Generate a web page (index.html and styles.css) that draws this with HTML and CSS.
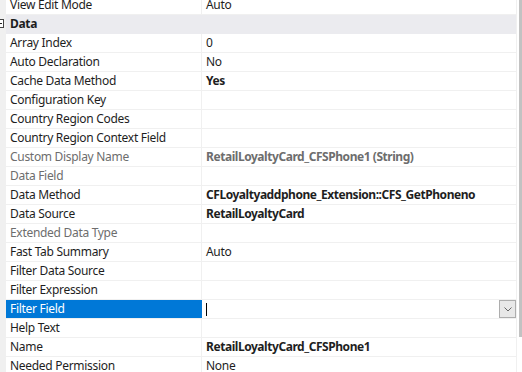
FILE: index.html
```html
<!DOCTYPE html>
<html lang="en">
<head>
  <meta charset="UTF-8">
  <title>Properties</title>
  <link rel="stylesheet" href="styles.css">
</head>
<body>
  <div class="property-grid">
    <div class="gutter">
      <span class="expander"></span>
    </div>
    <div class="props">
      <div class="row first"><div class="name">View Edit Mode</div><div class="value">Auto</div></div>
      <div class="row group"><div class="name">Data</div></div>
      <div class="row"><div class="name">Array Index</div><div class="value">0</div></div>
      <div class="row"><div class="name">Auto Declaration</div><div class="value">No</div></div>
      <div class="row"><div class="name">Cache Data Method</div><div class="value bold">Yes</div></div>
      <div class="row"><div class="name">Configuration Key</div><div class="value"></div></div>
      <div class="row"><div class="name">Country Region Codes</div><div class="value"></div></div>
      <div class="row"><div class="name">Country Region Context Field</div><div class="value"></div></div>
      <div class="row readonly"><div class="name">Custom Display Name</div><div class="value bold">RetailLoyaltyCard_CFSPhone1 (String)</div></div>
      <div class="row readonly"><div class="name">Data Field</div><div class="value"></div></div>
      <div class="row"><div class="name">Data Method</div><div class="value bold">CFLoyaltyaddphone_Extension::CFS_GetPhoneno</div></div>
      <div class="row"><div class="name">Data Source</div><div class="value bold">RetailLoyaltyCard</div></div>
      <div class="row readonly"><div class="name">Extended Data Type</div><div class="value"></div></div>
      <div class="row"><div class="name">Fast Tab Summary</div><div class="value">Auto</div></div>
      <div class="row"><div class="name">Filter Data Source</div><div class="value"></div></div>
      <div class="row"><div class="name">Filter Expression</div><div class="value"></div></div>
      <div class="row selected">
        <div class="name">Filter Field</div>
        <div class="value editing">
          <span class="caret"></span>
          <span class="dropdown-btn">
            <svg width="8" height="5" viewBox="0 0 8 5"><polyline points="0.5,0.5 4,4 7.5,0.5" fill="none" stroke="#666" stroke-width="1"/></svg>
          </span>
        </div>
      </div>
      <div class="row"><div class="name">Help Text</div><div class="value"></div></div>
      <div class="row"><div class="name">Name</div><div class="value bold">RetailLoyaltyCard_CFSPhone1</div></div>
      <div class="row"><div class="name">Needed Permission</div><div class="value">None</div></div>
    </div>
    <div class="scrollbar"><div class="thumb"></div></div>
  </div>
</body>
</html>
```

FILE: styles.css
```css
body {
  margin: 0;
  background: #fff;
  font-family: 'Noto Sans', 'Segoe UI', sans-serif;
  font-size: 12px;
  letter-spacing: -0.3px;
  color: #1e1e1e;
  overflow: hidden;
}

.property-grid {
  display: flex;
  width: 522px;
  height: 372px;
  overflow: hidden;
}

.gutter {
  width: 6px;
  flex: none;
  background: #f0f0f0;
  position: relative;
}

/* the collapse box of the "Data" group, clipped by the window edge */
.expander {
  position: absolute;
  left: -5px;
  top: 19px;
  width: 7px;
  height: 7px;
  border: 1px solid #444;
  background: #fff;
}
.expander::after {
  content: '';
  position: absolute;
  left: 1px;
  right: 1px;
  top: 3px;
  height: 1px;
  background: #222;
}

.props {
  width: 510px;
  flex: none;
  border-right: 1px solid #f0f0f0;
}

.row {
  display: grid;
  grid-template-columns: 196px 1fr;
  height: 18px;
  line-height: 18px;
  border-bottom: 1px solid #f0f0f0;
  white-space: nowrap;
}

.row.first {
  margin-top: -4px;
}

.name {
  padding-left: 4px;
  border-right: 1px solid #f0f0f0;
  overflow: hidden;
}

.value {
  padding-left: 4px;
  overflow: hidden;
}

.bold {
  font-weight: bold;
  letter-spacing: -0.45px;
}

.row.readonly {
  color: #6d6d6d;
}

.row.group {
  display: block;
  background: #ebebef;
  font-weight: bold;
  border-bottom-color: #ebebef;
}
.row.group .name {
  border-right: none;
}

.row.selected .name {
  background: #0078d7;
  color: #fff;
  border-right-color: #0078d7;
}

.value.editing {
  display: flex;
  align-items: center;
  justify-content: space-between;
  padding-right: 0;
}

.caret {
  width: 1px;
  height: 13px;
  background: #000;
}

.dropdown-btn {
  width: 15px;
  height: 16px;
  border: 1px solid #adadad;
  background: #e8e8e8;
  display: flex;
  align-items: center;
  justify-content: center;
}

.scrollbar {
  flex: 1;
  background: #fff;
  display: flex;
  justify-content: flex-end;
}
.thumb {
  width: 3px;
  height: 337px;
  background: #c2c2c2;
}
```
